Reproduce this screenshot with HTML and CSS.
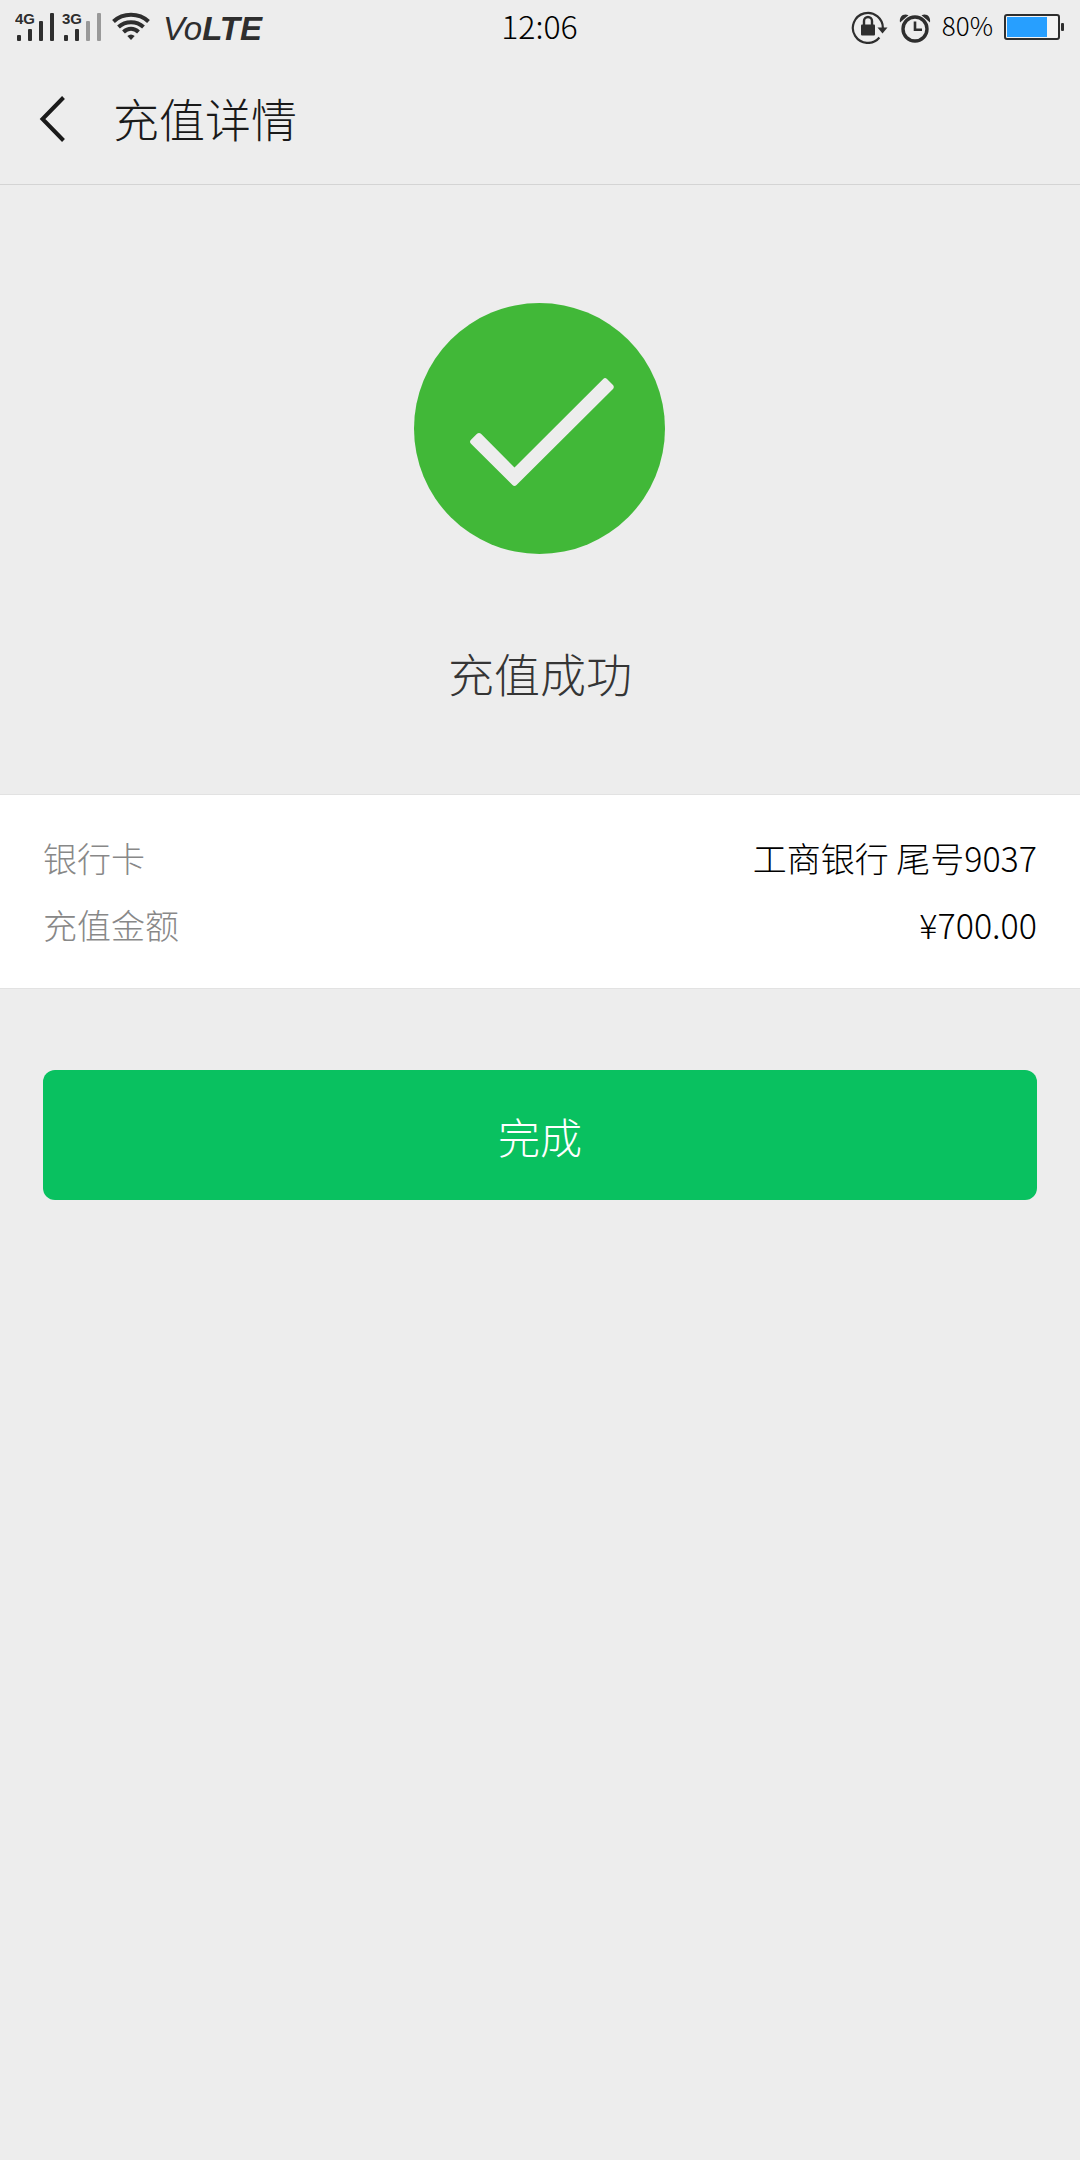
FILE: index.html
```html
<!DOCTYPE html>
<html lang="zh-CN">
<head>
<meta charset="utf-8">
<meta name="viewport" content="width=device-width, initial-scale=1">
<title>充值详情</title>
<link rel="stylesheet" href="styles.css">
</head>
<body>
<div class="status-bar">
  <div class="status-left">
    <svg class="signals" width="90" height="32" viewBox="0 0 90 32" role="img" aria-label="4G 3G">
      <g fill="#2e2e2e">
        <rect x="2" y="24" width="4" height="6" rx="1"/>
        <rect x="13" y="18" width="4" height="12" rx="1"/>
        <rect x="24" y="10" width="4" height="20" rx="1"/>
        <rect x="35" y="2" width="4" height="28" rx="1"/>
        <rect x="49" y="24" width="4" height="6" rx="1"/>
        <rect x="60" y="18" width="4" height="12" rx="1"/>
        <text class="network" x="0" y="13">4G</text>
        <text class="network" x="47" y="13">3G</text>
      </g>
      <g fill="#999">
        <rect x="71" y="10" width="4" height="20" rx="1"/>
        <rect x="82" y="2" width="4" height="28" rx="1"/>
      </g>
    </svg>
    <svg class="wifi" width="38" height="32" viewBox="0 0 38 32" fill="none" stroke="#2e2e2e" stroke-width="4" aria-hidden="true">
      <path d="M1.500 10.500C11 1.500 27 1.500 36.500 10.500"/>
      <path d="M6.500 16C13.500 9.500 24.500 9.500 31.500 16"/>
      <path d="M11.500 21C16 16.700 22 16.700 26.500 21"/>
      <path d="M19 29L15.300 25Q19 22 22.700 25Z" fill="#2e2e2e" stroke="none"/>
    </svg>
    <span class="volte">Vo<b>LTE</b></span>
  </div>
  <time class="clock">12:06</time>
  <div class="status-right">
    <svg width="38" height="34" viewBox="0 0 38 34" aria-hidden="true">
      <path d="M28.400 27.500A15 15 0 1 1 31.800 19" fill="none" stroke="#2e2e2e" stroke-width="2.200"/>
      <path d="M26.500 17.500h10l-5 6z" fill="#2e2e2e"/>
      <rect x="10" y="14.500" width="14" height="11" rx="1" fill="#2e2e2e"/>
      <path d="M13 15V11a4 4 0 0 1 8 0V15" fill="none" stroke="#2e2e2e" stroke-width="2.400"/>
    </svg>
    <svg class="alarm" width="32" height="34" viewBox="0 0 32 34" aria-hidden="true">
      <circle cx="16" cy="19" r="12" fill="none" stroke="#2e2e2e" stroke-width="3.400"/>
      <path d="M16 11.500V19.800H23" fill="none" stroke="#2e2e2e" stroke-width="2.600"/>
      <path d="M1 12.500C0 7 4 3 9.500 5.200ZM31 12.500C32 7 28 3 22.500 5.200Z" fill="#2e2e2e"/>
    </svg>
    <span class="percent">80%</span>
    <svg width="60" height="28" viewBox="0 0 60 28" aria-hidden="true">
      <rect x="1" y="2" width="54" height="24" rx="2" fill="#f4f4f4" stroke="#2e2e2e" stroke-width="2"/>
      <rect x="3" y="4" width="40" height="20" fill="#279fff"/>
      <rect x="57" y="10" width="3" height="8" rx="1" fill="#2e2e2e"/>
    </svg>
  </div>
</div>

<header class="header">
  <button class="back" type="button" aria-label="返回">
    <svg width="28" height="48" viewBox="0 0 28 48" fill="none" stroke="#1a1a1a" stroke-width="4" aria-hidden="true">
      <path d="M24.500 2.500L3.500 24L24.500 45.500"/>
    </svg>
  </button>
  <h1 class="title">充值详情</h1>
</header>

<main>
  <section class="result">
    <svg class="success" width="252" height="252" viewBox="0 0 252 252" aria-hidden="true">
      <circle cx="125.500" cy="125.500" r="125.500" fill="#41b838"/>
      <path d="M63 130.800Q65 129 67 130.800L100.500 164.500L189.200 76Q191 74 193 76L199 82Q200.600 84 199 86L102.500 182Q100.500 184 98.500 182L57 140.800Q55 138.800 57 136.800Z" fill="#ededed"/>
    </svg>
    <p class="result-text">充值成功</p>
  </section>
  <dl class="details">
    <div class="row"><dt>银行卡</dt><dd>工商银行 尾号9037</dd></div>
    <div class="row"><dt>充值金额</dt><dd>¥700.00</dd></div>
  </dl>
  <div class="actions">
    <button class="done" type="button">完成</button>
  </div>
</main>
</body>
</html>
```
FILE: styles.css
```css
* {
  box-sizing: border-box;
}

body {
  margin: 0;
  min-height: 100vh;
  background: #ededed;
  color: #000;
  font-family: "Noto Sans CJK SC", sans-serif;
  font-weight: 300;
}

button {
  border: 0;
  font: inherit;
  cursor: pointer;
}

.status-bar {
  display: grid;
  grid-template-columns: 1fr auto 1fr;
  align-items: center;
  height: 54px;
  padding: 0 16px 0 15px;
}

.status-left,
.status-right {
  display: flex;
  align-items: center;
}

.status-left {
  color: #2e2e2e;
}

.status-right {
  justify-content: flex-end;
}

.network {
  font: bold 15px "Liberation Sans", sans-serif;
}

.wifi {
  margin: 0 13px 0 7px;
}

.volte {
  padding-top: 4px;
  font: italic 33px/36px "Liberation Sans", sans-serif;
}

.clock {
  padding-bottom: 4px;
  font-size: 32px;
  line-height: 40px;
}

.alarm {
  margin-left: 10px;
}

.percent {
  margin: 0 11px;
  padding-bottom: 4px;
  font-size: 26px;
  line-height: 40px;
}

.header {
  display: flex;
  align-items: center;
  height: 131px;
  padding: 0 39px;
  border-bottom: 1px solid #d4d4d4;
}

.back {
  display: flex;
  padding: 0;
  background: none;
}

.title {
  margin: 0 0 0 46px;
  padding-bottom: 4px;
  color: #1a1a1a;
  font-size: 46px;
  font-weight: 300;
  line-height: 64px;
}

.result {
  display: flex;
  flex-direction: column;
  align-items: center;
  padding: 118px 0 90px;
}

.result-text {
  margin: 85px 0 0;
  color: #353535;
  font-size: 46px;
  line-height: 64px;
}

.details {
  margin: 0;
  padding: 29px 43px 30px;
  border: solid #e2e2e2;
  border-width: 1px 0;
  background: #fff;
  font-size: 34px;
  line-height: 67px;
}

.row {
  display: flex;
  justify-content: space-between;
}

dt {
  color: #888;
}

dd {
  margin: 0;
}

.actions {
  padding: 81px 43px;
}

.done {
  width: 100%;
  height: 130px;
  border-radius: 12px;
  background: #09c160;
  color: #fff;
  font-size: 42px;
}
```
